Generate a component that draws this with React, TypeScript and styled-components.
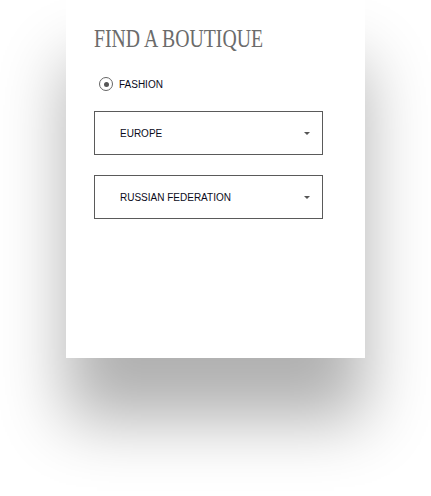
import React from "react";
import styled, { createGlobalStyle } from "styled-components";

const Global = createGlobalStyle`
  html, body { margin: 0; padding: 0; background: #ffffff; }
  body { width: 431px; height: 496px; overflow: hidden; }
`;

const Page = styled.div`
  display: flex;
  justify-content: center;
  width: 431px;
  height: 496px;
`;

const Card = styled.div`
  width: 299px;
  height: 358px;
  box-sizing: border-box;
  background: #ffffff;
  box-shadow: 0 62px 62px rgba(0, 0, 0, 0.31);
  padding: 24px 42px 0 28px;
  display: flex;
  flex-direction: column;
`;

const Title = styled.h1`
  margin: 0;
  font-family: "Liberation Serif", "Times New Roman", serif;
  font-weight: 400;
  font-size: 25px;
  line-height: 30px;
  color: #6b6b6b;
  white-space: nowrap;
  display: inline-block;
  transform: scaleX(0.79);
  transform-origin: left center;
`;

const RadioRow = styled.label`
  display: flex;
  align-items: center;
  gap: 6px;
  margin-top: 22px;
  margin-left: 5px;
  height: 16px;
`;

const RadioCircle = styled.span`
  width: 14px;
  height: 14px;
  box-sizing: border-box;
  border: 1.3px solid #666;
  border-radius: 50%;
  display: flex;
  align-items: center;
  justify-content: center;
  &::after {
    content: "";
    width: 5px;
    height: 5px;
    border-radius: 50%;
    background: #555;
  }
`;

const Label = styled.span`
  font-family: "Liberation Sans", Arial, sans-serif;
  font-size: 10px;
  color: #0a0a1a;
  text-transform: uppercase;
`;

const Selects = styled.div`
  display: flex;
  flex-direction: column;
  gap: 20px;
  margin-top: 19px;
`;

const SelectBox = styled.div`
  height: 44px;
  box-sizing: border-box;
  border: 1px solid #5a5a5a;
  display: flex;
  align-items: center;
  justify-content: space-between;
  padding: 0 12px 0 25px;
`;

const Arrow = styled.span`
  width: 0;
  height: 0;
  border-left: 3px solid transparent;
  border-right: 3px solid transparent;
  border-top: 3px solid #555;
`;

const Select: React.FC<{ value: string }> = ({ value }) => (
  <SelectBox>
    <Label>{value}</Label>
    <Arrow />
  </SelectBox>
);

export default function App() {
  return (
    <>
      <Global />
      <Page>
        <Card>
          <div>
            <Title>FIND A BOUTIQUE</Title>
          </div>
          <RadioRow>
            <RadioCircle />
            <Label>Fashion</Label>
          </RadioRow>
          <Selects>
            <Select value="Europe" />
            <Select value="Russian Federation" />
          </Selects>
        </Card>
      </Page>
    </>
  );
}
